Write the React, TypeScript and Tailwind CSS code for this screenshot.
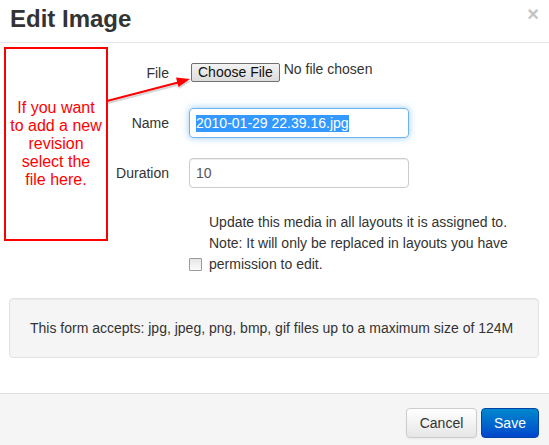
import React from "react";

const font = { fontFamily: '"Liberation Sans", Arial, sans-serif' };

function Annotation() {
  return (
    <>
      <div className="absolute left-[4px] top-[47px] flex h-[194px] w-[104px] items-center justify-center border-2 border-[#ff0000] bg-white">
        <p className="text-center text-[16px] leading-[18px] text-[#ff0000]">
          If you want
          <br />
          to add a new
          <br />
          revision
          <br />
          select the
          <br />
          file here.
        </p>
      </div>
      <svg className="pointer-events-none absolute left-0 top-0" width="549" height="445">
        <line x1="108" y1="103" x2="181" y2="84" stroke="#bbbbbb" strokeWidth="2" opacity="0.6" />
        <polygon points="191,81 179,89 177,80" fill="#bbbbbb" opacity="0.6" />
        <line x1="107" y1="101" x2="180" y2="82" stroke="#ff0000" strokeWidth="2" />
        <polygon points="190,79 178.5,87 176,77.5" fill="#ff0000" />
      </svg>
    </>
  );
}

function FieldRow({ label, children }: { label: string; children: React.ReactNode }) {
  return (
    <div className="flex h-[30px] items-center">
      <label className="w-[160px] text-right text-[14px] text-[#333]">{label}</label>
      <div className="ml-[20px] flex items-center">{children}</div>
    </div>
  );
}

export default function App() {
  return (
    <div className="relative flex h-[445px] w-[549px] flex-col overflow-hidden bg-white" style={font}>
      <div className="flex h-[43px] shrink-0 items-start justify-between border-b border-[#e5e5e5] pl-[10px] pr-[10px]">
        <h3 className="pt-[4px] text-[24px] font-bold leading-[30px] text-[#333]">Edit Image</h3>
        <span className="pt-[4px] text-[20px] font-bold leading-[20px] text-[#c4c4c4]">×</span>
      </div>

      <div className="flex flex-col pl-[9px] pt-[15px]">
        <FieldRow label="File">
          <div className="flex h-[30px] items-start pt-[5px]">
            <button className="ml-[2px] h-[19px] rounded-[2px] border border-[#707070] bg-gradient-to-b from-[#f3f3f3] to-[#dcdcdc] px-[6px] text-[14px] leading-[17px] text-[#111]">
              Choose File
            </button>
            <span className="ml-[4px] -mt-[2px] text-[14px] leading-[16px] text-[#333]">No file chosen</span>
          </div>
        </FieldRow>

        <div className="mt-[20px]">
          <FieldRow label="Name">
            <div className="flex h-[30px] w-[220px] items-center rounded-[4px] border border-[#6cb4ee] px-[6px] shadow-[0_0_7px_rgba(82,168,236,0.6)]">
              <span className="bg-[#3399ff] text-[14px] leading-[17px] text-white">2010-01-29 22.39.16.jpg</span>
            </div>
          </FieldRow>
        </div>

        <div className="mt-[20px]">
          <FieldRow label="Duration">
            <div className="flex h-[30px] w-[220px] items-center rounded-[4px] border border-[#cccccc] px-[6px] shadow-[inset_0_1px_1px_rgba(0,0,0,0.075)]">
              <span className="text-[14px] text-[#555]">10</span>
            </div>
          </FieldRow>
        </div>

        <div className="ml-[180px] mt-[24px] flex items-end">
          <span className="mb-[4px] h-[13px] w-[13px] rounded-[1px] border border-[#9a9a9a] bg-gradient-to-b from-[#e6e6e6] to-[#fafafa]" />
          <p className="ml-[7px] text-[14px] leading-[21px] text-[#333]">
            Update this media in all layouts it is assigned to.
            <br />
            Note: It will only be replaced in layouts you have
            <br />
            permission to edit.
          </p>
        </div>

        <div className="mt-[23px] flex h-[60px] w-[530px] items-center rounded-[4px] border border-[#e3e3e3] bg-[#f5f5f5] pl-[20px] shadow-[inset_0_1px_1px_rgba(0,0,0,0.05)]">
          <p className="text-[14px] leading-[20px] text-[#333]">
            This form accepts: jpg, jpeg, png, bmp, gif files up to a maximum size of 124M
          </p>
        </div>
      </div>

      <div className="mt-[35px] flex flex-1 items-start justify-end gap-[4px] border-t border-[#dddddd] bg-[#f5f5f5] pr-[10px] pt-[14px]">
        <button className="h-[30px] w-[71px] rounded-[4px] border border-[#cccccc] bg-gradient-to-b from-white to-[#e6e6e6] text-[14px] text-[#333] shadow-[0_1px_2px_rgba(0,0,0,0.05)]">
          Cancel
        </button>
        <button className="h-[30px] w-[58px] rounded-[4px] border border-[#0044aa] bg-gradient-to-b from-[#0088cc] to-[#0044cc] text-[14px] text-white">
          Save
        </button>
      </div>

      <Annotation />
    </div>
  );
}
